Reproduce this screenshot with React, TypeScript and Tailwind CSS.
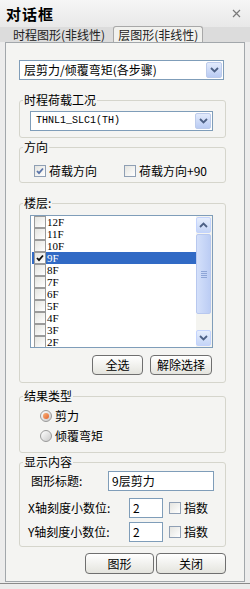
import React from 'react';

const floors = ['12F', '11F', '10F', '9F', '8F', '7F', '6F', '5F', '4F', '3F', '2F'];

const Chevron = ({ up }: { up?: boolean }) => (
  <svg width="9" height="6" viewBox="0 0 9 6">
    <path d={up ? 'M1 5 L4.5 1.5 L8 5' : 'M1 1 L4.5 4.5 L8 1'} stroke="#4d6185" strokeWidth="1.8" fill="none" />
  </svg>
);

const DropBtn = () => (
  <div className="w-[16px] h-full rounded-[2px] border border-[#bccbeb] bg-gradient-to-b from-[#e3ebfc] to-[#b9cbf3] flex items-center justify-center">
    <Chevron />
  </div>
);

const Combo = ({ text, className, textClass }: { text: string; className: string; textClass: string }) => (
  <div className={`h-[20px] bg-white border border-[#7f9db9] flex items-stretch p-[1px] ${className}`}>
    <span className={`flex-1 pl-[3px] flex items-center whitespace-nowrap ${textClass}`}>{text}</span>
    <DropBtn />
  </div>
);

const Check = ({ checked, mark = '#5a74a8', className = '' }: { checked?: boolean; mark?: string; className?: string }) => (
  <div className={`w-[12px] h-[12px] border border-[#8f9fb4] bg-gradient-to-br from-[#e4e4e0] to-white flex items-center justify-center ${className}`}>
    {checked && (
      <svg width="8" height="8" viewBox="0 0 8 8">
        <path d="M1 4 L3 6.2 L7 1.5" stroke={mark} strokeWidth="1.8" fill="none" />
      </svg>
    )}
  </div>
);

const Radio = ({ on }: { on?: boolean }) => (
  <div className="w-[12px] h-[12px] rounded-full border border-[#9a9a9a] bg-gradient-to-br from-white to-[#c9c9c9] flex items-center justify-center">
    {on && <div className="w-[6px] h-[6px] rounded-full bg-gradient-to-br from-[#f7b27a] to-[#e2612a]" />}
  </div>
);

const Group = ({ title, className, children }: { title: string; className: string; children: React.ReactNode }) => (
  <fieldset className={`border border-[#d5d5cc] rounded-[3px] w-[207px] ${className}`}>
    <legend className="ml-[3px] px-[1px] leading-[14px]">{title}</legend>
    {children}
  </fieldset>
);

const Btn = ({ children, className }: { children: React.ReactNode; className: string }) => (
  <div className={`h-[20px] border border-[#6f6f6f] rounded-[4px] bg-gradient-to-b from-white to-[#e4e4de] flex items-center justify-center ${className}`}>
    {children}
  </div>
);

const TextBox = ({ value, className }: { value: string; className: string }) => (
  <div className={`h-[20px] bg-white border border-[#7f9db9] pl-[3px] flex items-center ${className}`}>{value}</div>
);

export default function App() {
  return (
    <div className="w-[250px] h-[589px] bg-[#ececec] flex flex-col text-[12px] text-black font-['Noto_Sans_CJK_SC',sans-serif] leading-[14px]">
      {/* title bar */}
      <div className="h-[27px] px-[6px] flex items-center justify-between bg-gradient-to-b from-[#f6f6f6] to-[#e8e8e8]">
        <span className="font-bold text-[15px] tracking-[1px]">对话框</span>
        <svg width="9" height="9" viewBox="0 0 9 9" className="mr-[3px]">
          <path d="M1 1 L8 8 M8 1 L1 8" stroke="#7a7a7a" strokeWidth="1.2" />
        </svg>
      </div>

      {/* tabs */}
      <div className="h-[15px] flex items-end bg-[#dcdcdc] pl-[13px] text-[#222]">
        <span className="h-[15px] leading-[15px]">时程图形(非线性)</span>
        <span className="ml-[8px] h-[16px] leading-[15px] px-[4px] bg-[#f1f1ee] border border-b-0 border-[#a8a8a8] rounded-t-[3px]">层图形(非线性)</span>
      </div>

      {/* panel */}
      <div className="ml-[5px] w-[240px] h-[540px] border border-[#a2a7ab] bg-[#f4f4f2] flex flex-col pl-[13px]">
        <Combo text="层剪力/倾覆弯矩(各步骤)" className="mt-[17px] w-[205px]" textClass="" />

        <Group title="时程荷载工况" className="mt-[13px] h-[45px]">
          <div className="pl-[10px] pt-[4px]">
            <Combo text="THNL1_SLC1(TH)" className="w-[183px]" textClass="font-['Liberation_Mono',monospace] text-[10px] pl-[4px]" />
          </div>
        </Group>

        <Group title="方向" className="mt-[2px] h-[43px]">
          <div className="pl-[14px] pt-[10px] flex items-center">
            <Check checked />
            <span className="ml-[3px]">荷载方向</span>
            <Check className="ml-[27px]" />
            <span className="ml-[3px]">荷载方向+90</span>
          </div>
        </Group>

        <Group title="楼层:" className="mt-[13px] h-[187px]">
          <div className="pl-[10px] pt-[5px]">
            <div className="w-[183px] h-[133px] bg-white border border-[#7f9db9] flex overflow-hidden">
              <div className="flex-1 pl-[1px] overflow-hidden">
                {floors.map((f) => (
                  <div
                    key={f}
                    className={f === '9F' ? 'h-[12px] flex items-center bg-[#316ac5] text-white' : 'h-[12px] flex items-center'}
                  >
                    <Check checked={f === '9F'} mark="#111" className="ml-[2px] w-[11px] h-[11px] border-[#9a9a9a]" />
                    <span className="ml-[1px] font-['Liberation_Serif',serif] text-[11px] leading-[11px]">{f}</span>
                  </div>
                ))}
              </div>
              <div className="w-[16px] flex flex-col bg-[#f4f4f0] py-[1px] pr-[1px]">
                <div className="h-[16px] rounded-[2px] border border-[#c3d3fd] bg-gradient-to-b from-[#e6eefc] to-[#c5d5f7] flex items-center justify-center">
                  <Chevron up />
                </div>
                <div className="h-[80px] mt-[1px] rounded-[2px] border border-[#b8c8ef] bg-gradient-to-r from-[#d4e0fa] to-[#bccdf4] flex items-center justify-center">
                  <div className="flex flex-col gap-[1px]">
                    <div className="w-[6px] h-[1px] bg-[#8ea5d7]" />
                    <div className="w-[6px] h-[1px] bg-[#8ea5d7]" />
                    <div className="w-[6px] h-[1px] bg-[#8ea5d7]" />
                    <div className="w-[6px] h-[1px] bg-[#8ea5d7]" />
                  </div>
                </div>
                <div className="flex-1" />
                <div className="h-[16px] rounded-[2px] border border-[#c3d3fd] bg-gradient-to-b from-[#e6eefc] to-[#c5d5f7] flex items-center justify-center">
                  <Chevron />
                </div>
              </div>
            </div>
            <div className="flex mt-[7px] pl-[62px] gap-[7px]">
              <Btn className="w-[51px]">全选</Btn>
              <Btn className="w-[62px]">解除选择</Btn>
            </div>
          </div>
        </Group>

        <Group title="结果类型" className="mt-[6px] h-[64px]">
          <div className="pl-[20px] pt-[6px] flex flex-col gap-[6px]">
            <div className="flex items-center h-[14px]">
              <Radio on />
              <span className="ml-[3px]">剪力</span>
            </div>
            <div className="flex items-center h-[14px]">
              <Radio />
              <span className="ml-[3px]">倾覆弯矩</span>
            </div>
          </div>
        </Group>

        <Group title="显示内容" className="mt-[2px] h-[92px]">
          <div className="pl-[8px] pt-[2px] flex flex-col">
            <div className="flex items-center">
              <span className="w-[80px] pl-[3px]">图形标题:</span>
              <TextBox value="9层剪力" className="w-[106px]" />
            </div>
            <div className="flex items-center mt-[7px]">
              <span className="w-[101px]">X轴刻度小数位:</span>
              <TextBox value="2" className="w-[34px]" />
              <Check className="ml-[6px]" />
              <span className="ml-[3px]">指数</span>
            </div>
            <div className="flex items-center mt-[4px]">
              <span className="w-[101px]">Y轴刻度小数位:</span>
              <TextBox value="2" className="w-[34px]" />
              <Check className="ml-[6px]" />
              <span className="ml-[3px]">指数</span>
            </div>
          </div>
        </Group>

        <div className="flex mt-[6px] pl-[66px] gap-[2px]">
          <Btn className="w-[69px] h-[21px]">图形</Btn>
          <Btn className="w-[70px] h-[21px]">关闭</Btn>
        </div>
      </div>
      <div className="mt-[1px] h-[1px] bg-[#8a8a8a]" />
    </div>
  );
}
